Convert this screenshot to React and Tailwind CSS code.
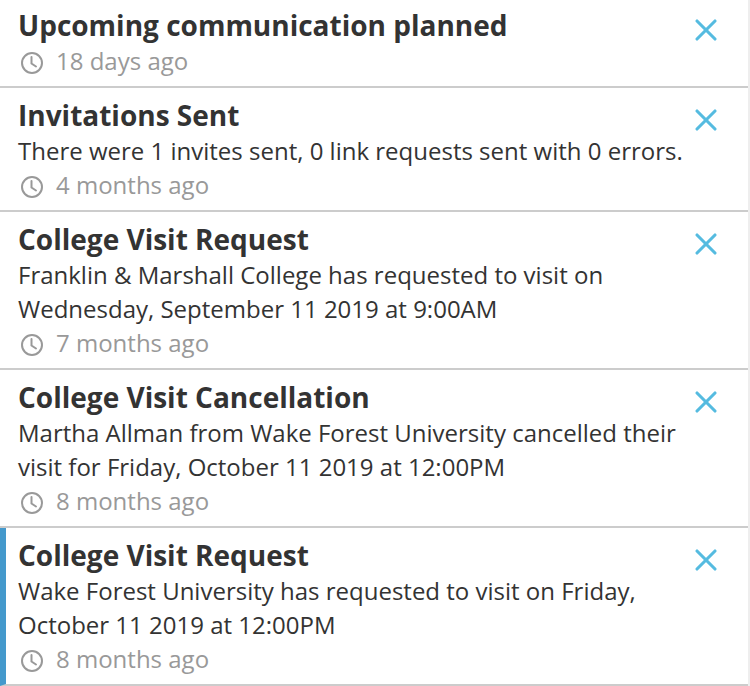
import { X } from 'lucide-react'

const items = [
  { title: 'Upcoming communication planned', time: '18 days ago' },
  { title: 'Invitations Sent', body: ['There were 1 invites sent, 0 link requests sent with 0 errors.'], time: '4 months ago' },
  { title: 'College Visit Request', body: ['Franklin & Marshall College has requested to visit on', 'Wednesday, September 11 2019 at 9:00AM'], time: '7 months ago' },
  { title: 'College Visit Cancellation', body: ['Martha Allman from Wake Forest University cancelled their', 'visit for Friday, October 11 2019 at 12:00PM'], time: '8 months ago' },
  { title: 'College Visit Request', body: ['Wake Forest University has requested to visit on Friday,', 'October 11 2019 at 12:00PM'], time: '8 months ago', unread: true },
]

function ClockIcon() {
  return (
    <svg width="24" height="24" viewBox="0 0 24 24" fill="none" stroke="#999999" strokeWidth="2" strokeLinecap="round" className="shrink-0 ml-[2px] mt-[4px]">
      <circle cx="12" cy="12" r="10" />
      <path d="M11.5 6v6.5l4.5 3" />
    </svg>
  )
}

function Item({ item }) {
  return (
    <div className={`flex justify-between border-b-2 border-[#cccccc] pr-[24px] pt-[8px] pb-[8px] first:-mt-[2px] ${item.unread ? 'border-l-[6px] border-l-[#4499cc] pl-[12px]' : 'pl-[18px]'}`}>
      <div>
        <h3 className="text-[28px] leading-[38px] font-bold text-[#333333] whitespace-nowrap">{item.title}</h3>
        {item.body && item.body.map(line => (
          <p key={line} className="text-[24px] leading-[34px] text-[#333333] whitespace-nowrap">{line}</p>
        ))}
        <div className="flex items-center gap-[12px] h-[34px] text-[24px] text-[#999999]">
          <ClockIcon />
          <span>{item.time}</span>
        </div>
      </div>
      <X size={36} strokeWidth={2.1} className="text-[#55bbe0] mt-[6px] shrink-0" />
    </div>
  )
}

export default function App() {
  return (
    <div className="w-[750px] h-[686px] overflow-hidden bg-white border-r-2 border-[#eeeeee] font-['Open_Sans',sans-serif]">
      {items.map((item, i) => <Item key={i} item={item} />)}
    </div>
  )
}
